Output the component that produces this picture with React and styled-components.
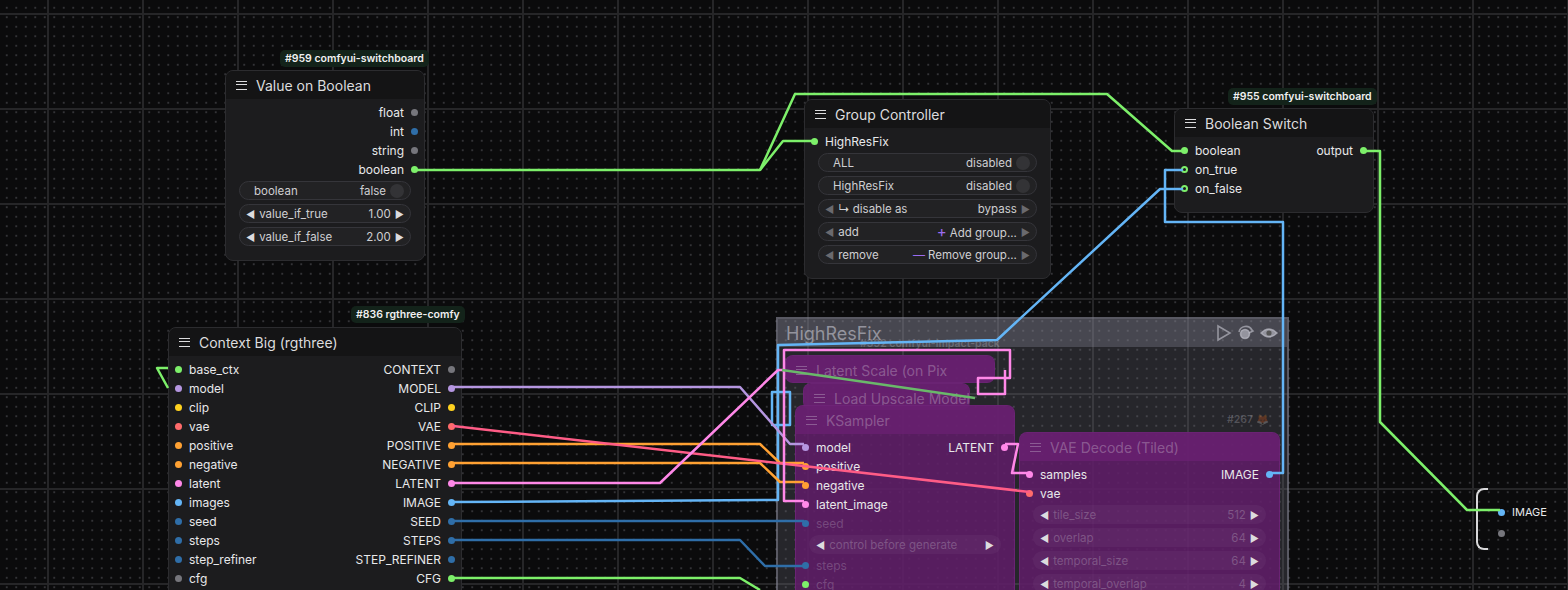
import React from 'react';
import styled, { createGlobalStyle } from 'styled-components';

const Global = createGlobalStyle`
  html, body { margin: 0; padding: 0; background: #0b0b0c; }
  body { font-family: Inter, "Noto Sans", sans-serif; }
`;

const Canvas = styled.div`
  position: relative;
  width: 1568px;
  height: 590px;
  overflow: hidden;
  background-color: #0b0b0c;
  background-image:
    linear-gradient(to right, #262628 2px, transparent 2px),
    linear-gradient(to bottom, #262628 2px, transparent 2px),
    radial-gradient(circle, #333336 0.8px, transparent 1.1px);
  background-size: 95px 95px, 95px 95px, 9.5px 9.5px;
  background-position: 47px 13px, 47px 13px, 2px 3px;
`;

const Node = styled.div`
  position: absolute;
  left: ${p => p.$x}px;
  top: ${p => p.$y}px;
  width: ${p => p.$w}px;
  height: ${p => (p.$h ? p.$h + 'px' : 'auto')};
  background: ${p => (p.$bypass ? 'rgba(96,28,104,0.85)' : '#1c1c1e')};
  border: 1px solid ${p => (p.$bypass ? 'rgba(120,40,130,0.6)' : '#2c2c2f')};
  border-radius: 8px;
  color: #e4e4e6;
  font-size: 12px;
  box-sizing: border-box;
  overflow: hidden;
`;

const Header = styled.div`
  height: 28px;
  display: flex;
  align-items: center;
  gap: 9px;
  padding: 0 10px;
  background: ${p => (p.$bypass ? 'rgba(110,34,118,0.6)' : '#141415')};
  font-size: 14px;
  white-space: nowrap;
  color: ${p => (p.$faded ? 'rgba(230,230,235,0.3)' : '#dcdcde')};
`;

const Burger = styled.span`
  width: 11px;
  height: 9px;
  flex: none;
  border-top: 1.5px solid currentColor;
  border-bottom: 1.5px solid currentColor;
  position: relative;
  box-sizing: border-box;
  &::after {
    content: '';
    position: absolute;
    left: 0; right: 0; top: 2.3px;
    border-top: 1.5px solid currentColor;
  }
`;

const Body = styled.div`
  padding-top: 4px;
  display: flex;
  flex-direction: column;
`;

const Row = styled.div`
  height: 19px;
  flex: none;
  display: flex;
  align-items: center;
  justify-content: space-between;
  padding: 0 6px;
  color: ${p => (p.$faded ? 'rgba(230,230,235,0.22)' : '#e8e8ea')};
`;

const Slot = styled.span`
  display: flex;
  align-items: center;
  gap: 7px;
  flex-direction: ${p => (p.$out ? 'row-reverse' : 'row')};
`;

const Dot = styled.span`
  width: 7px;
  height: 7px;
  border-radius: 50%;
  background: ${p => (p.$ring ? 'transparent' : p.$c)};
  border: ${p => (p.$ring ? `2px solid ${p.$c}` : 'none')};
  box-sizing: border-box;
  flex: none;
`;

const Widget = styled.div`
  height: 19px;
  flex: none;
  box-sizing: border-box;
  margin: 2px 13px 2px 13px;
  border-radius: 10px;
  background: ${p => (p.$faded ? 'rgba(255,255,255,0.04)' : '#222224')};
  border: 1px solid ${p => (p.$faded ? 'transparent' : '#35353a')};
  display: flex;
  align-items: center;
  justify-content: space-between;
  padding: 0 6px;
  font-size: 11.5px;
  white-space: nowrap;
  color: ${p => (p.$faded ? 'rgba(230,230,235,0.25)' : '#cfcfd2')};
  gap: 4px;
`;

const Label = styled.span`
  flex: 1;
  padding-left: ${p => p.$pad || 0}px;
  white-space: nowrap;
`;

const Arrow = styled.span`
  font-size: 10px;
  color: ${p => (p.$dim ? '#6a6a6e' : '#dcdcde')};
`;

const Toggle = styled.span`
  width: 14px;
  height: 14px;
  border-radius: 50%;
  background: #333336;
`;

const Accent = styled.span`
  color: #9b6cf0;
  font-size: ${p => p.$size || 12}px;
  margin-right: 3px;
`;

const Badge = styled.div`
  position: absolute;
  left: ${p => p.$x}px;
  top: ${p => p.$y}px;
  background: ${p => (p.$faded ? 'transparent' : '#13231a')};
  color: ${p => (p.$faded ? 'rgba(220,220,225,0.25)' : '#f0f0f0')};
  font-size: 10.5px;
  font-weight: 600;
  padding: 2px 5px;
  border-radius: 5px;
  white-space: nowrap;
`;

const Group = styled.div`
  position: absolute;
  left: 776px;
  top: 317px;
  width: 513px;
  height: 290px;
  background: rgba(110,110,125,0.28);
  border: 2px solid rgba(140,140,155,0.5);
  box-sizing: border-box;
`;

const GroupTitle = styled.div`
  height: 28px;
  background: rgba(150,150,165,0.3);
  display: flex;
  align-items: center;
  justify-content: space-between;
  padding: 0 8px;
  font-size: 18px;
  color: rgba(200,200,210,0.6);
`;

const Wires = styled.svg`
  position: absolute;
  left: 0;
  top: 0;
  pointer-events: none;
`;

const Reroute = styled.div`
  position: absolute;
  left: 1476px;
  top: 488px;
  height: 62px;
  display: flex;
  align-items: center;
  gap: 10px;
  font-size: 11px;
  color: #e8e8ea;
`;

const Bracket = styled.span`
  width: 12px;
  height: 62px;
  border: 2px solid #d8d8da;
  border-right: none;
  border-radius: 8px 0 0 8px;
  box-sizing: border-box;
`;

const RerouteCol = styled.div`
  display: flex;
  flex-direction: column;
  gap: 11px;
  margin-top: 4px;
`;

const C = {
  green: '#7df06a', grey: '#76767c', blue: '#3fa0e8', dblue: '#2f6ea8', lav: '#b596e0',
  yellow: '#ffd21f', red: '#ff6b6b', orange: '#ffa133', pink: '#ff88e8', img: '#64b5f6',
};

const SlotRow = ({ l, lc, r, rc, faded, ring }) => (
  <Row $faded={faded}>
    {l ? <Slot><Dot $c={lc} $ring={ring} />{l}</Slot> : <span />}
    {r ? <Slot $out><Dot $c={rc} />{r}</Slot> : <span />}
  </Row>
);

const Num = ({ label, value, faded, dim }) => (
  <Widget $faded={faded}>
    <Arrow $dim={dim}>◀</Arrow>
    <Label>{label}</Label>
    <span>{value}</span>
    <Arrow $dim={dim}>▶</Arrow>
  </Widget>
);

const Bool = ({ label, value }) => (
  <Widget>
    <Label $pad={8}>{label}</Label>
    <span>{value}</span>
    <Toggle />
  </Widget>
);

const GroupIcons = () => (
  <svg width="64" height="18" viewBox="0 0 64 18" fill="none" stroke="rgba(200,200,210,0.6)" strokeWidth="1.6">
    <path d="M3 2 L15 9 L3 16 Z" />
    <circle cx="30" cy="10" r="4.5" fill="rgba(200,200,210,0.6)" />
    <path d="M24 8 A7 7 0 0 1 37 6 M35 4 L38 7 L34 9" />
    <path d="M46 9 Q54 1 62 9 Q54 17 46 9 Z" fill="rgba(200,200,210,0.6)" />
    <circle cx="54" cy="9" r="2.6" fill="#555" stroke="none" />
  </svg>
);

const ctxRows = [
  ['base_ctx', C.green, 'CONTEXT', C.grey],
  ['model', C.lav, 'MODEL', C.lav],
  ['clip', C.yellow, 'CLIP', C.yellow],
  ['vae', C.red, 'VAE', C.red],
  ['positive', C.orange, 'POSITIVE', C.orange],
  ['negative', C.orange, 'NEGATIVE', C.orange],
  ['latent', C.pink, 'LATENT', C.pink],
  ['images', C.img, 'IMAGE', C.img],
  ['seed', C.dblue, 'SEED', C.dblue],
  ['steps', C.dblue, 'STEPS', C.dblue],
  ['step_refiner', C.dblue, 'STEP_REFINER', C.dblue],
  ['cfg', C.grey, 'CFG', C.green],
];

const wires = [
  [C.green, 'M415 170 L760 170 L795 94 L1107 94 L1172 151 L1183 151'],
  [C.green, 'M760 170 L783 141 L814 141'],
  [C.green, 'M1366 151 L1380 151 L1380 422 L1467 510 L1500 510'],
  [C.green, 'M168 388 L157 368 L168 368'],
  [C.img, 'M1271 473 L1283 473 L1283 222 L1165 222 L1165 170 L1183 170'],
  [C.img, 'M1183 189 L1160 189 L997 340 L778 345 L778 500 L453 502'],
  [C.img, 'M772 392 L772 425 L790 425 L790 392 Z'],
  [C.lav, 'M453 387 L740 387 L790 444 L804 444'],
  [C.orange, 'M453 444 L760 444 L780 463 L804 463'],
  [C.orange, 'M453 463 L760 463 L780 482 L804 482'],
  ['#ff5c86', 'M453 426 L1030 492'],
  [C.pink, 'M453 483 L660 483 L778 370 L784 370 L784 501 L804 501'],
  [C.pink, 'M784 370 L784 350 L1010 350 L1010 378 L978 378 L978 394 L1005 394 L1005 370'],
  [C.pink, 'M1005 444 L1018 444 L1012 473 L1030 473'],
  [C.dblue, 'M453 521 L804 521'],
  [C.dblue, 'M453 540 L740 540 L765 566 L804 566'],
  [C.green, 'M453 578 L740 578 L760 590'],
  ['#6ab86a', 'M782 370 L975 398'],
];

export default function App() {
  return (
    <>
      <Global />
      <Canvas>
        <Badge $x={280} $y={50}>#959 comfyui-switchboard</Badge>
        <Node $x={225} $y={70} $w={200} $h={191}>
          <Header><Burger />Value on Boolean</Header>
          <Body>
            <SlotRow r="float" rc={C.grey} />
            <SlotRow r="int" rc={C.dblue} />
            <SlotRow r="string" rc={C.grey} />
            <SlotRow r="boolean" rc={C.green} />
            <Bool label="boolean" value="false" />
            <Num label="value_if_true" value="1.00" />
            <Num label="value_if_false" value="2.00" />
          </Body>
        </Node>

        <Node $x={804} $y={99} $w={247} $h={180}>
          <Header><Burger />Group Controller</Header>
          <Body>
            <SlotRow l="HighResFix" lc={C.green} />
            <Bool label="ALL" value="disabled" />
            <Bool label="HighResFix" value="disabled" />
            <Num label="↳ disable as" value="bypass" dim />
            <Num label="add" value={<><Accent $size={15}>+</Accent>Add group...</>} dim />
            <Num label="remove" value={<><Accent>—</Accent>Remove group...</>} dim />
          </Body>
        </Node>

        <Badge $x={1228} $y={88}>#955 comfyui-switchboard</Badge>
        <Node $x={1174} $y={108} $w={200} $h={105}>
          <Header><Burger />Boolean Switch</Header>
          <Body>
            <SlotRow l="boolean" lc={C.green} r="output" rc={C.green} />
            <SlotRow l="on_true" lc={C.green} ring />
            <SlotRow l="on_false" lc={C.green} ring />
          </Body>
        </Node>

        <Badge $x={351} $y={306}>#836 rgthree-comfy</Badge>
        <Node $x={168} $y={327} $w={294} $h={300}>
          <Header><Burger />Context Big (rgthree)</Header>
          <Body>
            {ctxRows.map(([l, lc, r, rc]) => (
              <SlotRow key={l} l={l} lc={lc} r={r} rc={rc} />
            ))}
          </Body>
        </Node>

        <Group>
          <GroupTitle>
            <span>HighResFix</span>
            <GroupIcons />
          </GroupTitle>
        </Group>
        <Badge $x={855} $y={335} $faded>#392 comfyui-impact-pack</Badge>
        <Node $x={785} $y={355} $w={210} $h={28} $bypass>
          <Header $bypass $faded><Burger />Latent Scale (on Pix</Header>
        </Node>
        <Node $x={803} $y={383} $w={167} $h={27} $bypass>
          <Header $bypass $faded><Burger />Load Upscale Model</Header>
        </Node>
        <Node $x={795} $y={405} $w={220} $h={200} $bypass>
          <Header $bypass $faded><Burger />KSampler</Header>
          <Body>
            <SlotRow l="model" lc={C.lav} r="LATENT" rc={C.pink} />
            <SlotRow l="positive" lc={C.orange} />
            <SlotRow l="negative" lc={C.orange} />
            <SlotRow l="latent_image" lc={C.pink} />
            <SlotRow l="seed" lc={C.dblue} faded />
            <Num label="control before generate" value="" faded />
            <SlotRow l="steps" lc={C.dblue} faded />
            <SlotRow l="cfg" lc={C.green} faded />
          </Body>
        </Node>
        <Badge $x={1222} $y={411} $faded>#267 🦊</Badge>
        <Node $x={1019} $y={432} $w={261} $h={170} $bypass>
          <Header $bypass $faded><Burger />VAE Decode (Tiled)</Header>
          <Body>
            <SlotRow l="samples" lc={C.pink} r="IMAGE" rc={C.img} />
            <SlotRow l="vae" lc={C.red} />
            <Num label="tile_size" value="512" faded />
            <Num label="overlap" value="64" faded />
            <Num label="temporal_size" value="64" faded />
            <Num label="temporal_overlap" value="4" faded />
          </Body>
        </Node>

        <Reroute>
          <Bracket />
          <RerouteCol>
            <Slot><Dot $c={C.img} />IMAGE</Slot>
            <Slot><Dot $c={C.grey} /></Slot>
          </RerouteCol>
        </Reroute>

        <Wires width="1568" height="590">
          {wires.map(([c, d], i) => (
            <path key={i} d={d} stroke={c} strokeWidth="2.5" fill="none" strokeLinejoin="round" />
          ))}
        </Wires>
      </Canvas>
    </>
  );
}
